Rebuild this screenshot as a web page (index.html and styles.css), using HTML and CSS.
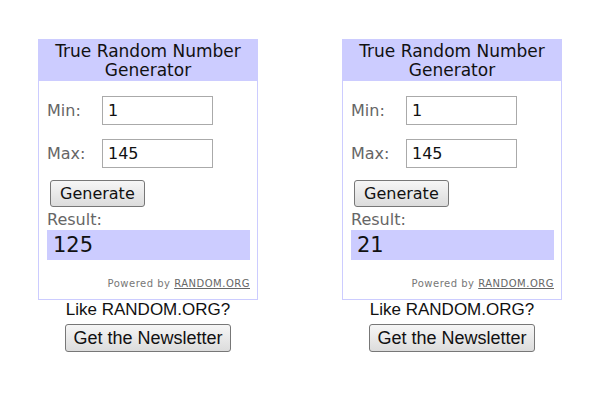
FILE: index.html
```html
<!DOCTYPE html>
<html lang="en">
<head>
    <meta charset="UTF-8">
    <title>True Random Number Generator</title>
    <link rel="stylesheet" href="styles.css">
</head>
<body>

<div class="page">
    <!-- first widget -->
    <div class="widget">
        <div class="box">
            <div class="title">True Random Number Generator</div>
            <div class="body">
                <div class="row"><span class="label">Min:</span><input class="field" type="text" value="1"></div>
                <div class="row"><span class="label">Max:</span><input class="field" type="text" value="145"></div>
                <button class="gen">Generate</button>
                <div class="label result-label">Result:</div>
                <div class="result">125</div>
                <div class="powered">Powered by <a href="#">RANDOM.ORG</a></div>
            </div>
        </div>
        <div class="like">Like RANDOM.ORG?</div>
        <button class="news">Get the Newsletter</button>
    </div>

    <!-- second widget -->
    <div class="widget">
        <div class="box">
            <div class="title">True Random Number Generator</div>
            <div class="body">
                <div class="row"><span class="label">Min:</span><input class="field" type="text" value="1"></div>
                <div class="row"><span class="label">Max:</span><input class="field" type="text" value="145"></div>
                <button class="gen">Generate</button>
                <div class="label result-label">Result:</div>
                <div class="result">21</div>
                <div class="powered">Powered by <a href="#">RANDOM.ORG</a></div>
            </div>
        </div>
        <div class="like">Like RANDOM.ORG?</div>
        <button class="news">Get the Newsletter</button>
    </div>
</div>

</body>
</html>
```

FILE: styles.css
```css
body {
    margin: 0;
    background: #fff;
    font-family: "DejaVu Sans", Verdana, sans-serif;
}
.page {
    display: flex;
    gap: 84px;
    padding: 39px 0 0 38px;
}
.widget {
    width: 220px;
    display: flex;
    flex-direction: column;
    align-items: center;
}
.box {
    width: 220px;
    box-sizing: border-box;
    border: 1px solid #ccccff;
}
.title {
    background: #ccccff;
    color: #111;
    text-align: center;
    font-size: 17px;
    line-height: 19px;
    padding: 2px 10px 2px;
    height: 37px;
}
.body {
    padding: 15px 7px 10px 8px;
}
.row {
    display: flex;
    align-items: center;
    margin-bottom: 14px;
}
.label {
    color: #666;
    font-size: 16px;
    width: 55px;
}
.field {
    width: 111px;
    height: 29px;
    box-sizing: border-box;
    border: 1px solid #aaa;
    padding: 2px 5px;
    font-family: "DejaVu Sans", Verdana, sans-serif;
    font-size: 16px;
    color: #111;
}
.gen, .news {
    background: linear-gradient(#f6f6f6, #dcdcdc);
    border: 1px solid #777;
    border-radius: 3px;
    color: #111;
    padding: 0 9px;
    height: 27px;
}
.gen {
    margin: -2px 0 0 3px;
    font-family: "DejaVu Sans", Verdana, sans-serif;
    font-size: 16px;
}
.result-label {
    margin-top: 3px;
    line-height: 20px;
}
.result {
    background: #ccccff;
    height: 30px;
    padding-left: 6px;
    font-size: 21px;
    line-height: 30px;
    color: #111;
}
.powered {
    text-align: right;
    font-size: 10px;
    color: #777;
    margin-top: 18px;
    letter-spacing: 0.5px;
}
.powered a {
    color: #666;
}
.like {
    font-family: "Liberation Sans", Arial, sans-serif;
    font-size: 17px;
    color: #111;
    line-height: 20px;
}
.news {
    font-family: "Liberation Sans", Arial, sans-serif;
    font-size: 18px;
    height: 28px;
    margin-top: 4px;
    padding: 0 7px;
}
```
